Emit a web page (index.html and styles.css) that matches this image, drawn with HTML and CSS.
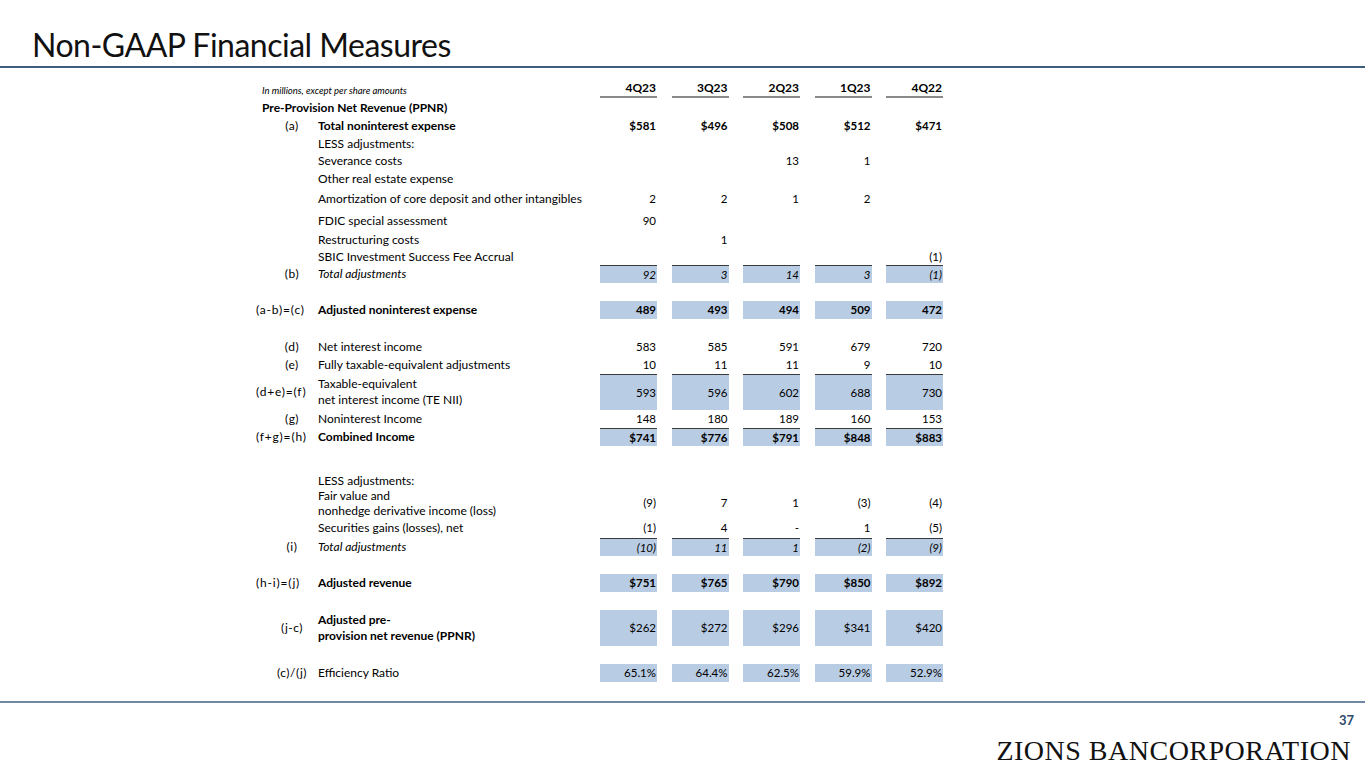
FILE: index.html
```html
<!DOCTYPE html>
<html lang="en">
<head>
<meta charset="utf-8">
<title>Non-GAAP Financial Measures</title>
<link rel="stylesheet" href="styles.css">
</head>
<body>
<div class="slide">
  <header class="top">
    <h1 class="title">Non-GAAP Financial Measures</h1>
  </header>
  <div class="rule rule-top"></div>
  <main class="main">
    <div class="table">
      <div class="row head r17">
        <div class="span note">In millions, except per share amounts</div>
        <div class="v">4Q23</div><div class="v">3Q23</div><div class="v">2Q23</div><div class="v">1Q23</div><div class="v">4Q22</div>
      </div>
      <div class="row r19 bold">
        <div class="span section">Pre-Provision Net Revenue (PPNR)</div>
      </div>
      <div class="row r18 bold">
        <div class="code">(a)</div><div class="label">Total noninterest expense</div>
        <div class="v">$581</div><div class="v">$496</div><div class="v">$508</div><div class="v">$512</div><div class="v">$471</div>
      </div>
      <div class="row r17">
        <div class="code"></div><div class="label">LESS adjustments:</div>
      </div>
      <div class="row r18">
        <div class="code"></div><div class="label">Severance costs</div>
        <div class="v"></div><div class="v"></div><div class="v">13</div><div class="v">1</div><div class="v"></div>
      </div>
      <div class="row r18">
        <div class="code"></div><div class="label">Other real estate expense</div>
      </div>
      <div class="row r22">
        <div class="code"></div><div class="label">Amortization of core deposit and other intangibles</div>
        <div class="v">2</div><div class="v">2</div><div class="v">1</div><div class="v">2</div><div class="v"></div>
      </div>
      <div class="row r21">
        <div class="code"></div><div class="label">FDIC special assessment</div>
        <div class="v">90</div><div class="v"></div><div class="v"></div><div class="v"></div><div class="v"></div>
      </div>
      <div class="row r17">
        <div class="code"></div><div class="label">Restructuring costs</div>
        <div class="v"></div><div class="v">1</div><div class="v"></div><div class="v"></div><div class="v"></div>
      </div>
      <div class="row r17">
        <div class="code"></div><div class="label">SBIC Investment Success Fee Accrual</div>
        <div class="v"></div><div class="v"></div><div class="v"></div><div class="v"></div><div class="v">(1)</div>
      </div>
      <div class="row r18 fill tb ital">
        <div class="code">(b)</div><div class="label">Total adjustments</div>
        <div class="v">92</div><div class="v">3</div><div class="v">14</div><div class="v">3</div><div class="v">(1)</div>
      </div>
      <div class="row r18"></div>
      <div class="row r18 fill bold">
        <div class="code long">(a-b)=(c)</div><div class="label">Adjusted noninterest expense</div>
        <div class="v">489</div><div class="v">493</div><div class="v">494</div><div class="v">509</div><div class="v">472</div>
      </div>
      <div class="row r19"></div>
      <div class="row r18">
        <div class="code">(d)</div><div class="label">Net interest income</div>
        <div class="v">583</div><div class="v">585</div><div class="v">591</div><div class="v">679</div><div class="v">720</div>
      </div>
      <div class="row r18">
        <div class="code">(e)</div><div class="label">Fully taxable-equivalent adjustments</div>
        <div class="v">10</div><div class="v">11</div><div class="v">11</div><div class="v">9</div><div class="v">10</div>
      </div>
      <div class="row r36 fill tb">
        <div class="code long">(d+e)=(f)</div><div class="label two">Taxable-equivalent<br>net interest income (TE NII)</div>
        <div class="v">593</div><div class="v">596</div><div class="v">602</div><div class="v">688</div><div class="v">730</div>
      </div>
      <div class="row r18">
        <div class="code">(g)</div><div class="label">Noninterest Income</div>
        <div class="v">148</div><div class="v">180</div><div class="v">189</div><div class="v">160</div><div class="v">153</div>
      </div>
      <div class="row r18 fill tb bold">
        <div class="code long">(f+g)=(h)</div><div class="label">Combined Income</div>
        <div class="v">$741</div><div class="v">$776</div><div class="v">$791</div><div class="v">$848</div><div class="v">$883</div>
      </div>
      <div class="row r27"></div>
      <div class="row r15">
        <div class="code"></div><div class="label">LESS adjustments:</div>
      </div>
      <div class="row r30">
        <div class="code"></div><div class="label two tight">Fair value and<br>nonhedge derivative income (loss)</div>
        <div class="v">(9)</div><div class="v">7</div><div class="v">1</div><div class="v">(3)</div><div class="v">(4)</div>
      </div>
      <div class="row r20">
        <div class="code"></div><div class="label">Securities gains (losses), net</div>
        <div class="v">(1)</div><div class="v">4</div><div class="v">-</div><div class="v">1</div><div class="v">(5)</div>
      </div>
      <div class="row r18 fill tb ital">
        <div class="code">(i)</div><div class="label">Total adjustments</div>
        <div class="v">(10)</div><div class="v">11</div><div class="v">1</div><div class="v">(2)</div><div class="v">(9)</div>
      </div>
      <div class="row r18"></div>
      <div class="row r18 fill bold">
        <div class="code long">(h-i)=(j)</div><div class="label">Adjusted revenue</div>
        <div class="v">$751</div><div class="v">$765</div><div class="v">$790</div><div class="v">$850</div><div class="v">$892</div>
      </div>
      <div class="row r18"></div>
      <div class="row r36 fill">
        <div class="code">(j-c)</div><div class="label two bold">Adjusted pre-<br>provision net revenue (PPNR)</div>
        <div class="v">$262</div><div class="v">$272</div><div class="v">$296</div><div class="v">$341</div><div class="v">$420</div>
      </div>
      <div class="row r18"></div>
      <div class="row r18 fill">
        <div class="code">(c)/(j)</div><div class="label">Efficiency Ratio</div>
        <div class="v">65.1%</div><div class="v">64.4%</div><div class="v">62.5%</div><div class="v">59.9%</div><div class="v">52.9%</div>
      </div>
    </div>
  </main>
  <div class="rule rule-bottom"></div>
  <footer class="foot">
    <div class="pagenum">37</div>
    <div class="logo">ZIONS BANCORPORATION</div>
  </footer>
</div>
</body>
</html>
```

FILE: styles.css
```css
html, body {
  margin: 0;
  padding: 0;
  background: #ffffff;
}

.slide {
  width: 1365px;
  height: 768px;
  overflow: hidden;
  display: flex;
  flex-direction: column;
  font-family: Lato, "Open Sans", "Liberation Sans", sans-serif;
  color: #000000;
}

.top {
  height: 66px;
  display: flex;
  align-items: flex-start;
  padding-left: 32px;
  padding-top: 25px;
  box-sizing: border-box;
}

.title {
  margin: 0;
  font-size: 32px;
  font-weight: 400;
  letter-spacing: -0.5px;
  line-height: 40px;
  color: #111111;
}

.rule {
  flex: none;
  width: 100%;
}

.rule-top {
  height: 2px;
  background: #3f5d7d;
}

.rule-bottom {
  height: 2px;
  background: #6f88a3;
}

.main {
  height: 633px;
  flex: none;
  padding-top: 13px;
  padding-left: 256px;
  box-sizing: border-box;
}

.table {
  width: 688px;
  font-size: 12px;
  line-height: 14px;
}

.row {
  display: flex;
  align-items: center;
  box-sizing: border-box;
}

.r15 { height: 15px; }
.r17 { height: 17px; }
.r18 { height: 18px; }
.r19 { height: 19px; }
.r20 { height: 20px; }
.r21 { height: 21px; }
.r22 { height: 22px; }
.r27 { height: 27px; }
.r30 { height: 30px; }
.r36 { height: 36px; }

.span {
  width: 344px;
  flex: none;
  padding-left: 6px;
  box-sizing: border-box;
}

.note {
  font-style: italic;
  font-size: 9.5px;
  align-self: flex-end;
  line-height: 12px;
  padding-bottom: 1px;
}

.section {
  font-weight: 700;
}

.code {
  width: 62px;
  flex: none;
  text-align: center;
  padding-left: 10px;
  box-sizing: border-box;
  font-weight: 400;
  font-style: normal;
  letter-spacing: 0.5px;
}

.code.long {
  text-align: left;
  padding-left: 0;
  letter-spacing: 0.8px;
}

.label {
  width: 282px;
  flex: none;
  white-space: nowrap;
}

.label.two {
  line-height: 16px;
}

.label.two.tight {
  line-height: 15px;
}

.v {
  width: 57px;
  flex: none;
  align-self: stretch;
  display: flex;
  align-items: center;
  justify-content: flex-end;
  padding-right: 1px;
  box-sizing: border-box;
  font-size: 11.5px;
}

.v + .v {
  margin-left: 14.5px;
}

.head .v {
  font-weight: 700;
  font-size: 12px;
  border-bottom: 2px solid #8a8a8a;
  padding-bottom: 1px;
}

.bold .label,
.bold .v,
.label.bold {
  font-weight: 700;
}

.ital .label,
.ital .v {
  font-style: italic;
}

.fill .v {
  background: #b8cce4;
}

.tb .v {
  border-top: 1px solid #3a3a3a;
}

.foot {
  flex: 1;
  display: flex;
  flex-direction: column;
  align-items: flex-end;
  padding-right: 13px;
  box-sizing: border-box;
}

.pagenum {
  font-weight: 700;
  font-size: 13px;
  line-height: 16px;
  color: #2f4a6b;
  margin-top: 9px;
  margin-right: -2px;
}

.logo {
  font-family: "Liberation Serif", "DejaVu Serif", serif;
  font-size: 28px;
  line-height: 30px;
  letter-spacing: 0.5px;
  color: #111111;
  margin-top: 8px;
  margin-right: 1px;
}
```
